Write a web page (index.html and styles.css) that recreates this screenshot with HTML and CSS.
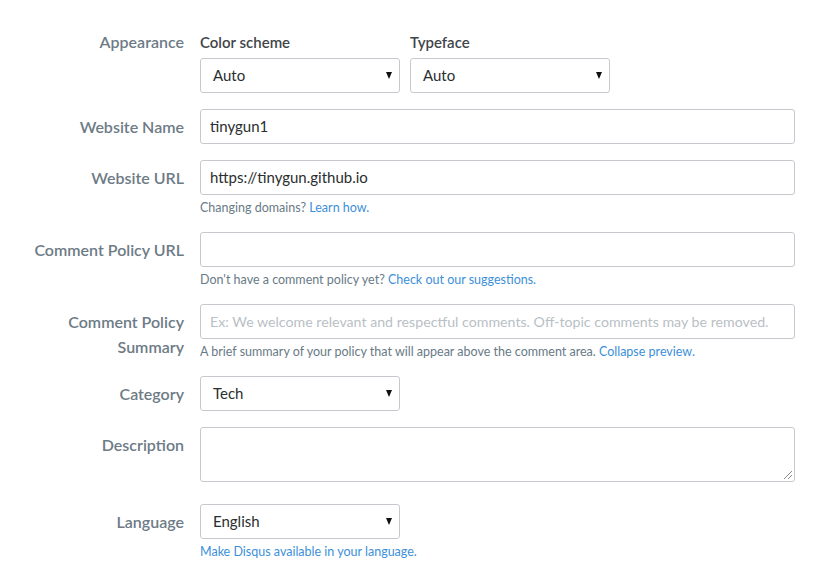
FILE: index.html
```html
<!DOCTYPE html>
<html lang="en">
<head>
<meta charset="utf-8">
<title>Settings</title>
<link rel="stylesheet" href="styles.css">
</head>
<body>
<form class="form">
  <div class="row">
    <div class="label">Appearance</div>
    <div class="field appearance">
      <div class="sub">
        <div class="sublabel">Color scheme</div>
        <div class="select"><span class="val">Auto</span><span class="arrow"></span></div>
      </div>
      <div class="sub">
        <div class="sublabel">Typeface</div>
        <div class="select"><span class="val">Auto</span><span class="arrow"></span></div>
      </div>
    </div>
  </div>

  <div class="row">
    <div class="label">Website Name</div>
    <div class="field">
      <div class="input">tinygun1</div>
    </div>
  </div>

  <div class="row">
    <div class="label">Website URL</div>
    <div class="field">
      <div class="input">https://tinygun.github.io</div>
      <div class="help">Changing domains? <a class="link">Learn how.</a></div>
    </div>
  </div>

  <div class="row">
    <div class="label">Comment Policy URL</div>
    <div class="field">
      <div class="input"></div>
      <div class="help">Don't have a comment policy yet? <a class="link">Check out our suggestions.</a></div>
    </div>
  </div>

  <div class="row">
    <div class="label">Comment Policy Summary</div>
    <div class="field">
      <div class="input placeholder">Ex: We welcome relevant and respectful comments. Off-topic comments may be removed.</div>
      <div class="help">A brief summary of your policy that will appear above the comment area. <a class="link">Collapse preview.</a></div>
    </div>
  </div>

  <div class="row">
    <div class="label">Category</div>
    <div class="field">
      <div class="select"><span class="val">Tech</span><span class="arrow"></span></div>
    </div>
  </div>

  <div class="row row-desc">
    <div class="label">Description</div>
    <div class="field">
      <div class="textarea"><span class="grip"></span></div>
    </div>
  </div>

  <div class="row">
    <div class="label">Language</div>
    <div class="field">
      <div class="select"><span class="val">English</span><span class="arrow"></span></div>
      <div class="help"><a class="link">Make Disqus available in your language.</a></div>
    </div>
  </div>
</form>
</body>
</html>
```

FILE: styles.css
```css
html, body {
  margin: 0;
  padding: 0;
  background: #ffffff;
}
body {
  font-family: "Lato", "Liberation Sans", sans-serif;
  color: #2a2e2e;
}
.form {
  display: flex;
  flex-direction: column;
  gap: 16px;
  padding-top: 31px;
}
.row {
  display: grid;
  grid-template-columns: 184px 595px;
  column-gap: 16px;
}
.row-desc {
  margin-bottom: 6px;
}
.label {
  text-align: right;
  font-size: 16px;
  font-weight: 600;
  color: #6d7b86;
  line-height: 25px;
  padding-top: 5px;
}
.appearance {
  display: flex;
  gap: 10px;
}
.row:first-child .label {
  padding-top: 2px;
  line-height: 18px;
}
.sublabel {
  font-size: 15px;
  font-weight: 600;
  color: #3f4549;
  line-height: 18px;
  margin-top: 2px;
  margin-bottom: 7px;
}
.input, .select, .textarea {
  box-sizing: border-box;
  height: 35px;
  border: 1px solid #c6cace;
  border-radius: 3px;
  background: #fff;
  font-size: 15px;
  line-height: 33px;
  color: #2a2e2e;
}
.input {
  padding: 0 9px;
  white-space: nowrap;
  overflow: hidden;
}
.placeholder {
  color: #b9c0c5;
  font-size: 14.2px;
}
.select {
  width: 200px;
  padding: 0 12px;
  display: flex;
  justify-content: space-between;
  align-items: center;
}
.arrow {
  width: 0;
  height: 0;
  border-left: 3.5px solid transparent;
  border-right: 3.5px solid transparent;
  border-top: 7px solid #111;
  margin-right: -5px;
  margin-top: -1px;
}
.textarea {
  height: 55px;
  position: relative;
}
.grip {
  position: absolute;
  right: 2px;
  bottom: 2px;
  width: 8px;
  height: 8px;
  background: linear-gradient(135deg, transparent 45%, #8a8a8a 45%, #8a8a8a 52%, transparent 52%, transparent 70%, #8a8a8a 70%, #8a8a8a 77%, transparent 77%);
}
.help {
  margin-top: 4px;
  font-size: 12.5px;
  line-height: 17px;
  color: #687a86;
}
.link {
  color: #3d8fd9;
  text-decoration: none;
}
```
